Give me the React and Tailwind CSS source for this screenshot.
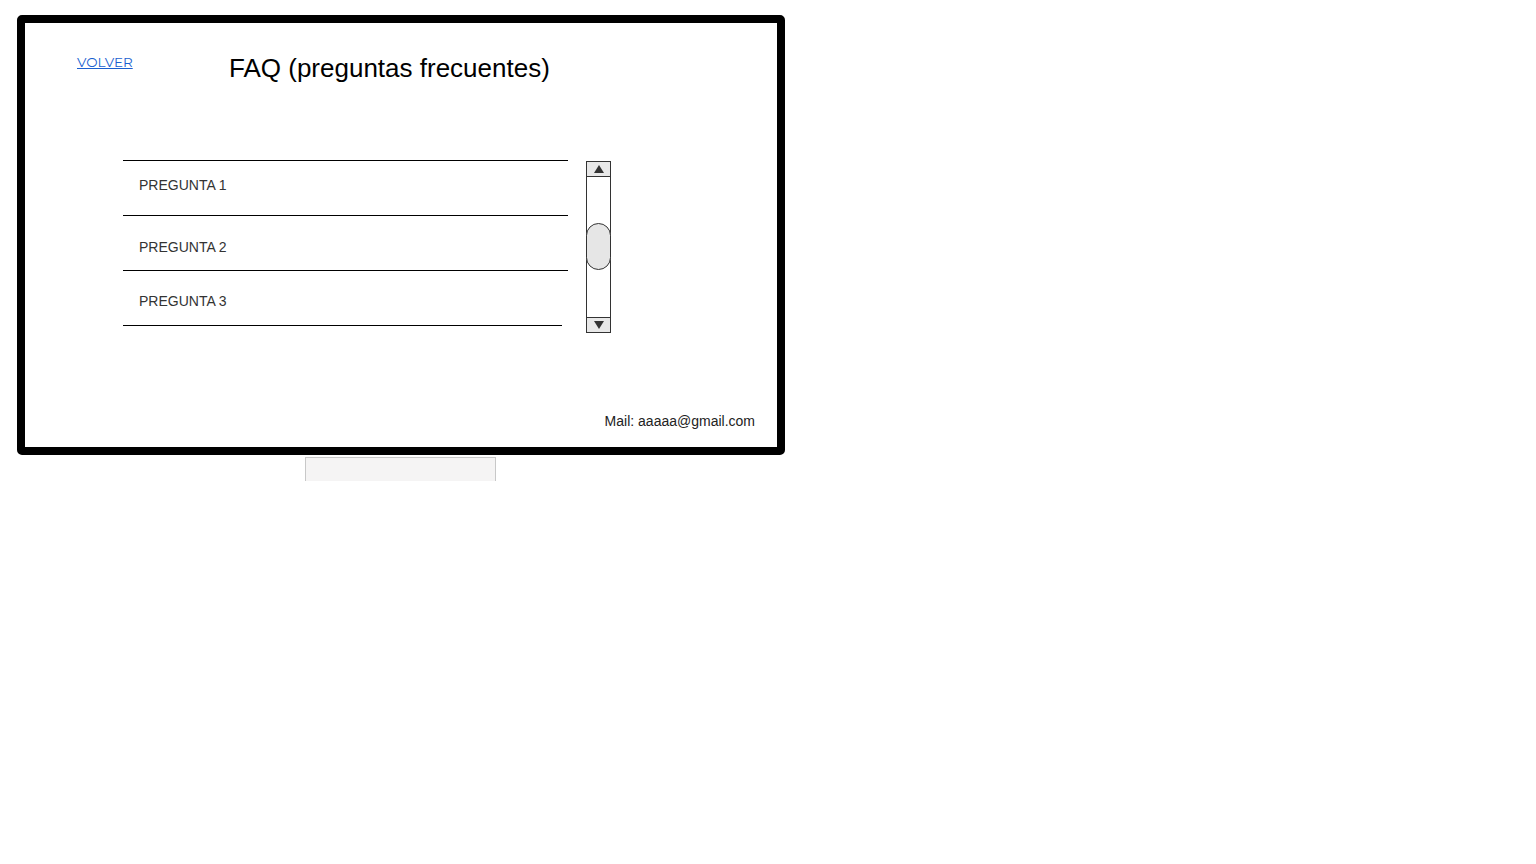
import React from 'react';

const questions = [
  { label: 'PREGUNTA 1', pad: 'pt-[16px]' },
  { label: 'PREGUNTA 2', pad: 'pt-[23px]' },
  { label: 'PREGUNTA 3', pad: 'pt-[22px]' },
];

function ScrollBar() {
  return (
    <div className="ml-[18px] mt-px flex h-[172px] w-[25px] flex-col border border-[#333] bg-white">
      <div className="flex h-[15px] items-center justify-center border-b border-[#333] bg-[#e8e8e8]">
        <span className="h-0 w-0 border-x-[5px] border-b-[8px] border-x-transparent border-b-[#333]" />
      </div>
      <div className="relative flex-1">
        {/* thumb */}
        <div className="absolute left-[-1px] top-[46px] h-[47px] w-[25px] rounded-full border border-[#333] bg-[#e6e6e6]" />
      </div>
      <div className="flex h-[15px] items-center justify-center border-t border-[#333] bg-[#e8e8e8]">
        <span className="h-0 w-0 border-x-[5px] border-t-[8px] border-x-transparent border-t-[#333]" />
      </div>
    </div>
  );
}

export default function App() {
  return (
    <div className="min-h-screen bg-white pl-[17px] pt-[15px] font-['Liberation_Sans',Arial,sans-serif]">
      {/* Screen */}
      <div className="flex h-[440px] w-[768px] flex-col rounded-[5px] border-[8px] border-black bg-white">
        {/* Header */}
        <div className="flex items-start pt-[30px]">
          <div className="-mt-[3px] w-[204px] pl-[52px]">
            <a href="#" className="font-['Montserrat','Open_Sans',sans-serif] text-[13.5px] leading-[16px] text-[#1a5fd0] underline">
              VOLVER
            </a>
          </div>
          <h1 className="text-[26px] leading-[30px] text-black">FAQ (preguntas frecuentes)</h1>
        </div>

        {/* List + scroll */}
        <div className="mt-[77px] flex items-start pl-[98px]">
          <div className="w-[445px]">
            <div className="h-px bg-black" />
            {questions.map((q, i) => (
              <div key={q.label}>
                <div className={`h-[54px] ${q.pad} pl-[16px] text-[14px] leading-[16px] text-[#333]`}>{q.label}</div>
                <div className={`h-px bg-black ${i === questions.length - 1 ? 'w-[439px]' : ''}`} />
              </div>
            ))}
          </div>
          <ScrollBar />
        </div>

        {/* Footer */}
        <div className="mt-auto flex justify-end pb-[18px] pr-[22px]">
          <span className="text-[14px] leading-[16px] text-[#222]">Mail: aaaaa@gmail.com</span>
        </div>
      </div>

      {/* Stand */}
      <div className="ml-[288px] mt-[2px] h-[24px] w-[191px] border-x border-t border-[#c8c8c8] bg-[#f5f4f4]" />
    </div>
  );
}
